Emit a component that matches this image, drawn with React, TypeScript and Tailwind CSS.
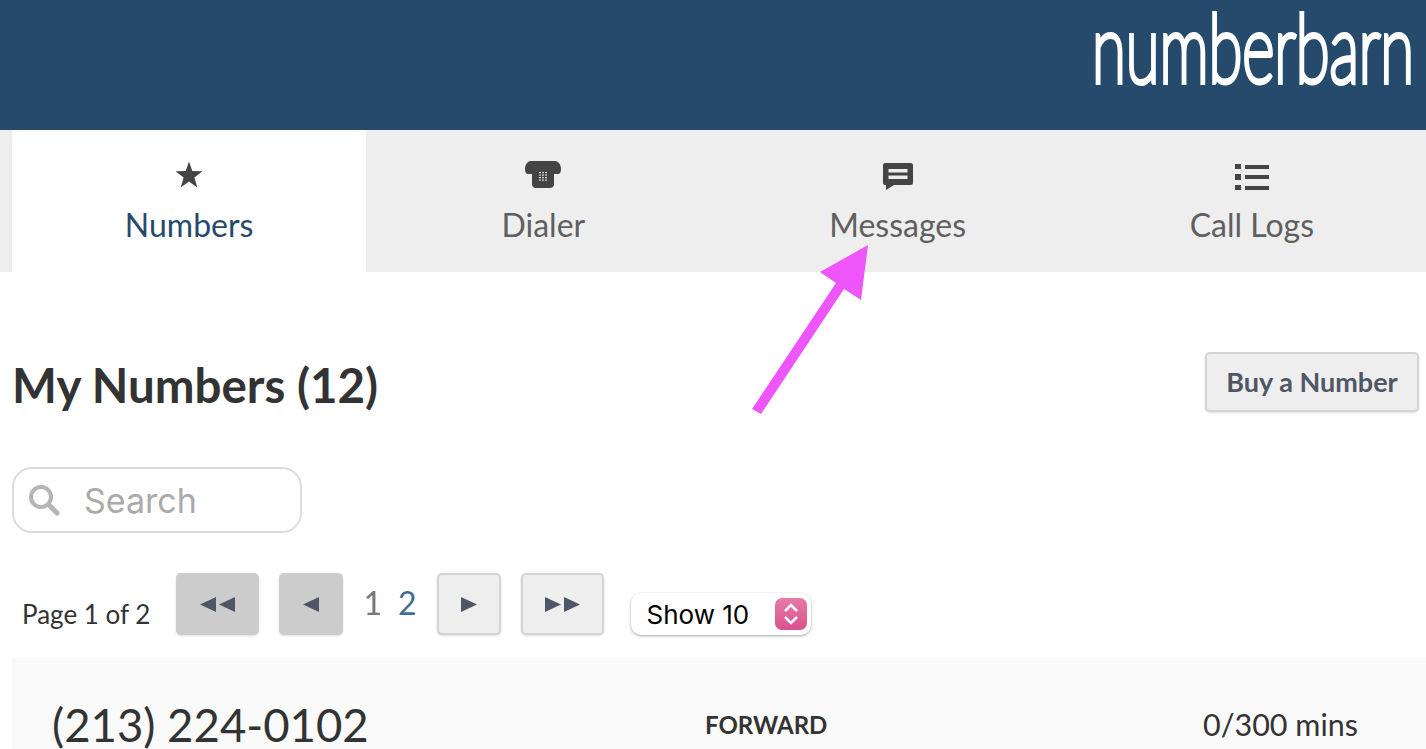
const sans = "font-['Lato','Open_Sans',sans-serif]";

function StarIcon() {
    return (
        <svg width="28" height="27" viewBox="0 0 28 27" fill="#444444">
            <path d="M14 0.5 L17.3 10 L27.5 10.2 L19.4 16.4 L22.3 26.5 L14 20.5 L5.7 26.5 L8.6 16.4 L0.5 10.2 L10.7 10 Z" />
        </svg>
    );
}

function PhoneIcon() {
    return (
        <svg width="36" height="27" viewBox="0 0 36 27" fill="#444444">
            <path d="M6 0 H30 C33 0 36 3 36 8 C36 11 35 13 33 13 H29 V23 C29 25.500 27.500 27 25 27 H11 C8.500 27 7 25.500 7 23 V13 H3 C1 13 0 11 0 8 C0 3 3 0 6 0 Z" />
            <g fill="#d8d8d8">
                <rect x="14" y="11" width="8" height="1.2" />
                <rect x="14" y="13.500" width="8" height="1.2" />
                <rect x="14" y="16" width="8" height="1.2" />
                <rect x="14" y="18.500" width="8" height="1.2" />
            </g>
            <g fill="#444444">
                <rect x="16" y="10.500" width="1" height="10" />
                <rect x="19" y="10.500" width="1" height="10" />
            </g>
        </svg>
    );
}

function MessageIcon() {
    return (
        <svg className="mt-[3px]" width="30" height="27" viewBox="0 0 30 27" fill="#444444">
            <path d="M2 0 H28 C29 0 30 1 30 2 V20 C30 21 29 22 28 22 H11 L3 27 V22 H2 C1 22 0 21 0 20 V2 C0 1 1 0 2 0 Z" />
            <rect x="5.500" y="6" width="19" height="3.500" fill="#eeeeee" />
            <rect x="5.500" y="12.500" width="19" height="3.500" fill="#eeeeee" />
        </svg>
    );
}

function ListIcon() {
    return (
        <svg className="mt-[5px]" width="34" height="26" viewBox="0 0 34 26" fill="#444444">
            <rect x="0" y="0" width="6" height="5" />
            <rect x="0" y="10" width="6" height="6" />
            <rect x="0" y="21" width="6" height="5" />
            <rect x="10" y="1" width="24" height="4" />
            <rect x="10" y="11" width="24" height="4" />
            <rect x="10" y="22" width="24" height="4" />
        </svg>
    );
}

function Tab({ label, active, icon }: { label: string; active?: boolean; icon: React.ReactNode }) {
    return (
        <div className={`h-[142px] flex flex-col items-center pt-[31px] ${active ? "bg-white text-[#264a6c]" : "text-[#5f5f5f]"}`}>
            <div className="h-[27px] flex items-center">{icon}</div>
            <span className="mt-[17px] text-[32px] leading-[40px] whitespace-nowrap">{label}</span>
        </div>
    );
}

function PageButton({ disabled, wide, children }: { disabled?: boolean; wide?: boolean; children: React.ReactNode }) {
    return (
        <div className={`${wide ? "w-[83px]" : "w-[64px]"} h-[62px] rounded-[5px] border-2 shadow-sm flex items-center justify-center gap-[3px] ${disabled ? "bg-[#cccccc] border-[#cccccc]" : "bg-[#eeeeee] border-[#d4d4d4]"}`}>
            {children}
        </div>
    );
}

function Tri({ left }: { left?: boolean }) {
    return (
        <svg width="16" height="15" viewBox="0 0 16 15" fill="#4f5666">
            <path d={left ? "M16 0 V15 L0 7.500 Z" : "M0 0 V15 L16 7.500 Z"} />
        </svg>
    );
}

export default function App() {
    return (
        <div className={`relative h-[749px] overflow-hidden bg-white ${sans}`}>
            <div className="h-[130px] bg-[#264a6c] flex justify-end pr-[10px]">
                {/* logo: squeezed real text, the original face is not installed */}
                <svg width="326" height="100" viewBox="0 0 326 100">
                    <text
                        x="2"
                        y="82"
                        textLength="322"
                        lengthAdjust="spacingAndGlyphs"
                        fontFamily="'Lato', sans-serif"
                        fontWeight="100"
                        fontSize="94"
                        fill="#ffffff"
                        stroke="#ffffff"
                        strokeWidth="6"
                    >
                        numberbarn
                    </text>
                </svg>
            </div>

            <div className="grid grid-cols-[repeat(4,354.25px)] bg-[#eeeeee] pl-[12px]">
                <Tab label="Numbers" active icon={<StarIcon />} />
                <Tab label="Dialer" icon={<PhoneIcon />} />
                <Tab label="Messages" icon={<MessageIcon />} />
                <Tab label="Call Logs" icon={<ListIcon />} />
            </div>

            <div className="pl-[12px] pr-[7px]">
                <div className="flex items-start justify-between mt-[80px]">
                    <h1 className="h-[60px] pt-[3px] text-[47.500px] leading-[60px] font-bold text-[#333333] whitespace-nowrap">My Numbers (12)</h1>
                    <button className="w-[214px] h-[60px] rounded-[5px] border-2 border-[#d4d4d4] bg-[#eeeeee] shadow-sm text-[27px] font-bold text-[#4f5666]">
                        Buy a Number
                    </button>
                </div>

                <div className="mt-[55px] w-[290px] h-[66px] rounded-[20px] border-2 border-[#dddddd] flex items-center pl-[14px]">
                    <svg width="32" height="32" viewBox="0 0 32 32" fill="none" stroke="#b5b5b5">
                        <circle cx="13" cy="13" r="10" strokeWidth="4" />
                        <path d="M20.500 20.500 L29 29" strokeWidth="5" strokeLinecap="round" />
                    </svg>
                    <span className="ml-[24px] font-['Inter',sans-serif] text-[34px] text-[#aaaaaa]">Search</span>
                </div>

                <div className="mt-[40px] flex items-end">
                    <span className="ml-[10px] mb-[3px] text-[26px] leading-[36px] text-[#333333] whitespace-nowrap">Page 1 of 2</span>
                    <div className="ml-[26px] flex items-center">
                        <PageButton disabled wide><Tri left /><Tri left /></PageButton>
                        <div className="ml-[20px]"><PageButton disabled><Tri left /></PageButton></div>
                        <span className="ml-[20px] mb-[3px] text-[32px] text-[#777777]">1</span>
                        <span className="ml-[16px] mb-[3px] text-[32px] text-[#3f6d96]">2</span>
                        <div className="ml-[20px]"><PageButton><Tri /></PageButton></div>
                        <div className="ml-[20px]"><PageButton wide><Tri /><Tri /></PageButton></div>
                    </div>
                    <div className="ml-[27px] w-[180px] h-[42px] rounded-[10px] bg-white shadow-[0_1px_3px_rgba(0,0,0,0.35)] flex items-center justify-between pl-[16px] pr-[4px]">
                        <span className="font-['Inter',sans-serif] text-[26px] text-black">Show 10</span>
                        <div className="w-[32px] h-[32px] rounded-[7px] bg-gradient-to-b from-[#e77aa8] to-[#d9508f] flex items-center justify-center">
                            <svg width="18" height="26" viewBox="0 0 18 26" fill="none" stroke="#ffffff" strokeWidth="2.500">
                                <path d="M3 10 L9 4 L15 10" />
                                <path d="M3 16 L9 22 L15 16" />
                            </svg>
                        </div>
                    </div>
                </div>
            </div>

            <div className="ml-[12px] mt-[22px] h-[136px] bg-[#fafafa] pl-[40px] pr-[68px] flex items-center">
                <span className="w-[653px] text-[45.500px] text-[#333333] whitespace-nowrap">(213) 224-0102</span>
                <span className="text-[24px] font-bold text-[#333333]">FORWARD</span>
                <span className="ml-auto text-[30.500px] text-[#333333]">0/300 mins</span>
            </div>

            {/* annotation arrow drawn over the screenshot */}
            <svg className="absolute left-[750px] top-[240px]" width="130" height="180" viewBox="0 0 130 180" fill="#ee55fb">
                <path d="M118 5 L70 32 L86 43 L2 169 L11 174 L94 49 L111 60 Z" />
            </svg>
        </div>
    );
}
